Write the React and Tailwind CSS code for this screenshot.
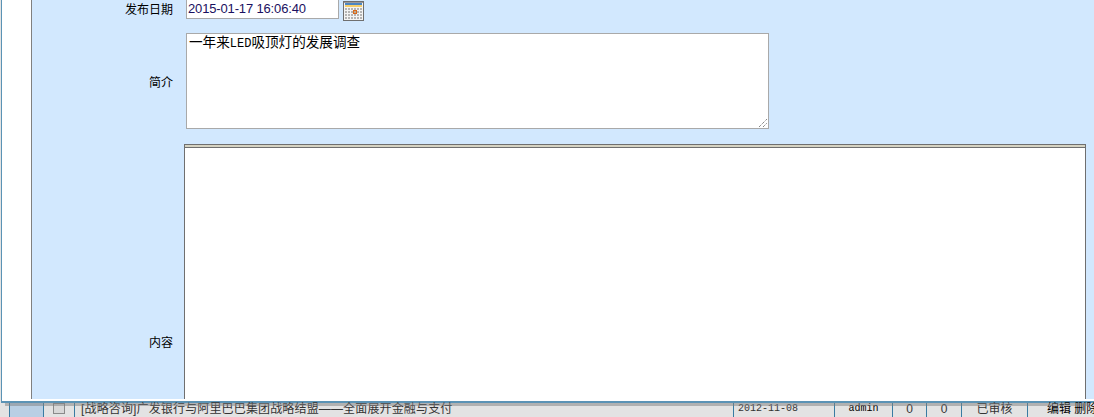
function CalendarIcon() {
  return (
    <svg width="21" height="20" viewBox="0 0 21 20" className="block shrink-0" shapeRendering="crispEdges">
      <rect x="0.5" y="0.5" width="20" height="19" fill="#f4f4f4" stroke="#6f6f6f" />
      <rect x="1" y="1" width="19" height="1" fill="#9a9a9a" />
      <rect x="2" y="2" width="17" height="2" fill="#4a86c5" />
      <rect x="2" y="4" width="17" height="2" fill="#f7cf6a" />
      {[7, 10, 13, 16].map((y) =>
        [2, 5, 8, 11, 14, 17].map((x) => (
          <rect key={x + "-" + y} x={x} y={y} width="2" height="2" fill="#b5b5b5" />
        ))
      )}
      <rect x="10" y="9" width="4" height="4" fill="#d9691c" />
      <rect x="11" y="10" width="2" height="2" fill="#b8a890" />
    </svg>
  );
}

function Cell({ className, children }) {
  return (
    <div className={"h-full shrink-0 border-r border-[#397ca3] pb-[3px] flex items-center justify-center " + className}>
      {children}
    </div>
  );
}

export default function App() {
  return (
    <div className="w-[1094px] h-[417px] overflow-hidden flex flex-col bg-[#e3e3e3] text-black font-['Liberation_Sans','Noto_Sans_CJK_SC',sans-serif]">
      {/* dialog */}
      <div className="h-[403px] shrink-0 flex bg-white border-l border-b-2 border-[#5b93b5] ml-px">
        <div className="w-[29px] shrink-0 bg-white" />
        <div className="flex-1 mb-[2px] flex flex-col bg-[#d2e8fe] border-l border-[#808080] min-w-0">
          <div className="h-[19px] shrink-0 flex items-start">
            <div className="w-[141px] shrink-0 pt-[2px] text-right text-[12px] leading-[17px]">发布日期</div>
            <div className="ml-[13px] w-[153px] h-[19px] shrink-0 bg-white border-l border-r border-b border-[#a9a9a9] pl-px text-[13px] tracking-[-0.15px] leading-[17px] text-[#1a1060] whitespace-nowrap">
              2015-01-17 16:06:40
            </div>
            <div className="ml-[4px] mt-px">
              <CalendarIcon />
            </div>
          </div>
          <div className="mt-[14px] h-[96px] shrink-0 flex items-center">
            <div className="w-[141px] shrink-0 pt-[5px] text-right text-[12px] leading-[17px]">简介</div>
            <div className="relative ml-[13px] w-[583px] h-[96px] shrink-0 bg-white border border-[#a9a9a9] pl-[2px] pt-[1px] text-[13.6px] leading-[16px] whitespace-nowrap">
              一年来<span className="font-['Liberation_Mono',monospace] text-[12px]">LED</span>吸顶灯的发展调查
              <svg width="10" height="10" viewBox="0 0 10 10" className="absolute right-0 bottom-0">
                <path d="M1 9 L9 1 M5 9 L9 5" stroke="#555" strokeWidth="1" strokeDasharray="1 1" fill="none" />
              </svg>
            </div>
          </div>
          <div className="mt-[15px] flex-1 flex items-stretch min-h-0">
            <div className="w-[141px] shrink-0 text-right text-[12px] leading-[17px] pt-[191px]">内容</div>
            <div className="ml-[11px] w-[902px] shrink-0 bg-white border-x border-[#6f6f6f] flex flex-col">
              <div className="h-[4px] shrink-0 bg-[#d6d3c2] border-y border-[#6f6f6f]" />
            </div>
          </div>
        </div>
      </div>
      {/* table row behind the dialog */}
      <div className="flex-1 min-h-0 flex relative text-[12px]">
        <div className="absolute inset-x-[5px] top-0 h-[3px] bg-[#808080]/50" />
        <div className="w-[10px] shrink-0 border-r border-[#397ca3]" />
        <Cell className="w-[34px] bg-[#b9cfe4]" />
        <Cell className="w-[31px]">
          <div className="w-[12px] h-[11px] border border-[#8a8a8a] bg-[#d8d8d8]" />
        </Cell>
        <Cell className="w-[659px] !justify-start pl-[6px] text-[#333] tracking-[0.15px] whitespace-nowrap">
          [战略咨询]广发银行与阿里巴巴集团战略结盟——全面展开金融与支付
        </Cell>
        <Cell className="w-[101px] !justify-start pl-[4px] font-['Liberation_Mono',monospace] text-[10px] text-[#333]">2012-11-08</Cell>
        <Cell className="w-[58px] font-['Liberation_Mono',monospace] text-[10px]">admin</Cell>
        <Cell className="w-[34px] text-[#333]">0</Cell>
        <Cell className="w-[35px] text-[#333]">0</Cell>
        <Cell className="w-[66px] text-[#333]">已审核</Cell>
        <div className="pl-[19px] whitespace-nowrap leading-[11px] pt-[1px]">编辑 删除</div>
      </div>
    </div>
  );
}
